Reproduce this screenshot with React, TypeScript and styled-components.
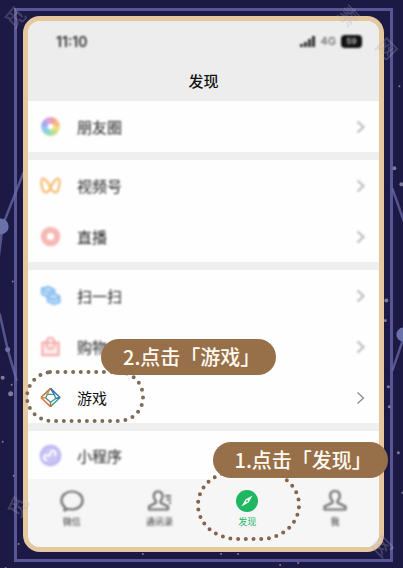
import React from 'react';
import styled, { createGlobalStyle, css } from 'styled-components';

const GlobalStyle = createGlobalStyle`
  *, *::before, *::after { box-sizing: border-box; }
  body {
    margin: 0;
    background: #1c1a45;
    font-family: "Noto Sans CJK SC", "Noto Sans", sans-serif;
  }
`;

const soft = css`
  filter: blur(1.2px);
`;

const Page = styled.div`
  position: relative;
  isolation: isolate;
  min-height: 100vh;
  padding: 8px 10px 7px 14px;
  background: #1c1a45;
  overflow: hidden;
`;

const Sky = styled.svg`
  position: absolute;
  inset: 0;
  width: 100%;
  height: 100%;
  z-index: -1;
`;

const Frame = styled.div`
  border: 3px solid rgba(110, 107, 176, 0.75);
  padding: 5px 6px 7px;
`;

const Phone = styled.main`
  display: flex;
  flex-direction: column;
  border: 5px solid #e5c8a0;
  border-radius: 17px;
  background: #efefef;
`;

const Header = styled.header`
  background: #ededed;
  border-radius: 12px 12px 0 0;
`;

const StatusBar = styled.div`
  display: flex;
  align-items: center;
  justify-content: space-between;
  height: 40px;
  padding: 0 17px 0 28px;
  color: #333;
  font-family: Inter, sans-serif;
  font-size: 14px;
  font-weight: 600;
  ${soft}
`;

const StatusIcons = styled.div`
  display: flex;
  align-items: center;
  gap: 5px;
  font-size: 11px;
  font-weight: 500;
  color: #666;
`;

const Battery = styled.span`
  width: 21px;
  height: 13px;
  border-radius: 4px;
  background: #111;
  color: #bbb;
  font-size: 8px;
  font-weight: 700;
  line-height: 13px;
  text-align: center;
`;

const Title = styled.h1`
  margin: 0;
  color: #111;
  font-size: 15px;
  font-weight: 500;
  line-height: 40px;
  text-align: center;
`;

const Groups = styled.div`
  display: flex;
  flex-direction: column;
  gap: 8px;
`;

const Group = styled.ul`
  margin: 0;
  padding: 0;
  list-style: none;
  background: #fefefe;
`;

const Item = styled.li`
  position: relative;
`;

const Row = styled.button<{ $soft: boolean; $short?: boolean }>`
  display: flex;
  align-items: center;
  gap: 15px;
  width: 100%;
  height: ${(p) => (p.$short ? 48 : 51)}px;
  padding: 0 14px 0 11px;
  border: 0;
  background: none;
  color: ${(p) => (p.$soft ? '#222' : '#111')};
  font-family: inherit;
  font-size: 15px;
  text-align: left;

  > * {
    ${(p) => p.$soft && soft}
  }
`;

const RowLabel = styled.span`
  flex: 1;
`;

const TabBar = styled.nav`
  display: grid;
  grid-template-columns: repeat(4, 1fr);
  height: 68px;
  background: #f6f6f6;
  border-radius: 0 0 12px 12px;
`;

const TabCell = styled.div`
  position: relative;
`;

const Tab = styled.button<{ $active: boolean }>`
  display: flex;
  flex-direction: column;
  align-items: center;
  gap: 2px;
  width: 100%;
  padding: 10px 0 0;
  border: 0;
  background: none;
  color: ${(p) => (p.$active ? '#1fb764' : '#333')};
  font-family: inherit;
  font-size: 9px;
  line-height: 13px;

  > * {
    ${(p) => !p.$active && soft}
  }
`;

const Ring = styled.svg<{ $place: 'row' | 'tab' }>`
  position: absolute;
  z-index: 1;
  overflow: visible;
  pointer-events: none;
  ${(p) =>
    p.$place === 'row'
      ? css`
          left: -2px;
          top: 0;
        `
      : css`
          left: -7px;
          top: -9px;
        `}
`;

const Callout = styled.div<{ $place: 'row' | 'tab' }>`
  position: absolute;
  z-index: 2;
  width: 175px;
  border-radius: 18px;
  background: #97704a;
  color: #fffaf0;
  font-size: 20px;
  font-weight: 500;
  line-height: 36px;
  white-space: nowrap;
  padding-left: 22px;
  ${(p) =>
    p.$place === 'row'
      ? css`
          left: 73px;
          top: -33px;
        `
      : css`
          left: 9px;
          top: -37px;
        `}
`;

const Chevron = ({ strong }: { strong: boolean }) => (
  <svg width="9" height="14" viewBox="0 0 9 14" fill="none" stroke={strong ? '#8c8c8c' : '#b8b8b8'} strokeWidth={strong ? 1.3 : 2} aria-hidden="true">
    <path d="M1.5 1.5 7.5 7l-6 5.5" />
  </svg>
);

const Icon = ({ children }: { children: React.ReactNode }) => (
  <svg width="23" height="23" viewBox="0 0 24 24" fill="none" strokeLinejoin="round" aria-hidden="true">
    {children}
  </svg>
);

const petals = ['#f2a09a', '#f5bd84', '#f3dc7e', '#b7df8e', '#8edbb8', '#8fc8f0', '#a3a8f0', '#d6a0e4'];

const MomentsIcon = () => (
  <Icon>
    {petals.map((color, i) => (
      <path key={color} d="M12 12 8 3a10 10 0 0 1 8 0Z" fill={color} transform={`rotate(${i * 45 + 22} 12 12)`} />
    ))}
    <circle cx="12" cy="12" r="3" fill="#fff" />
  </Icon>
);

const ChannelsIcon = () => (
  <Icon>
    <path d="M12 14.5C9.500 8.500 6 4 3.600 5c-2.200 1-.6 13 2.600 14C8.500 19.600 10.500 17.500 12 14.500c1.500 3 3.500 5.100 5.800 4.500 3.200-1 4.800-13 2.600-14C18 4 14.500 8.500 12 14.500Z" stroke="#f7bd72" strokeWidth="2.400" />
  </Icon>
);

const LiveIcon = () => (
  <Icon>
    <circle cx="12" cy="12" r="7" stroke="#f6b9b6" strokeWidth="6.500" />
    <circle cx="12" cy="12" r="3.200" fill="#fff" />
  </Icon>
);

const ScanIcon = () => (
  <Icon>
    <g stroke="#8dc1f0" strokeWidth="2.200" fill="#c3dffa">
      <path d="M3 4.500 10 3l6 3v6l-7 1.500-6-3Z" />
      <path d="M9 12.500 16 10l5.500 3v6L15 21l-6-3Z" />
      <path d="m3 6 7 3 6-2M9 14l6 2.500 6-2" fill="none" />
    </g>
  </Icon>
);

const ShopIcon = () => (
  <Icon>
    <path d="M3.500 8h17v13h-17Z" stroke="#f5b0b0" strokeWidth="2.400" fill="#fdeaea" />
    <path d="M8 13V7a4 4 0 0 1 8 0v6M9 14h6" stroke="#f5b0b0" strokeWidth="2.400" />
  </Icon>
);

const GamesIcon = () => (
  <Icon>
    <g strokeWidth="1.500">
      <path d="M2 12 12 2.500" stroke="#b9703f" />
      <path d="m12 2.500 10 9.500" stroke="#3a78b5" />
      <path d="M22 12 12 21.500" stroke="#39a98a" />
      <path d="M12 21.500 2 12" stroke="#e0713c" />
      <path d="M8.500 8.500 16 9l1.500 4-5.500 4-5-4.500Z" stroke="#4a9b8f" />
      <path d="M12 2.500 8.500 8.500M7 12.500 2 12" stroke="#d88a4a" />
      <path d="m12 2.500 4 6.500M17.500 13 22 12" stroke="#3b6fae" />
      <path d="M12 17v4.500" stroke="#cf5a45" />
    </g>
  </Icon>
);

const MiniProgramIcon = () => (
  <Icon>
    <circle cx="12" cy="12" r="10" fill="#c9c4f5" stroke="#bcb6f2" strokeWidth="2.500" />
    <path d="M8.500 16.500a2.500 2.500 0 1 1 0-4.500c2.500 1 3.500-.5 3.500-2.500a2.600 2.600 0 1 1 3.800 2.500" stroke="#fff" strokeWidth="2.200" />
  </Icon>
);

const TabIcon = ({ children }: { children: React.ReactNode }) => (
  <svg width="24" height="24" viewBox="0 0 24 24" fill="none" stroke="#6c6c6c" strokeWidth="2.200" strokeLinejoin="round" aria-hidden="true">
    {children}
  </svg>
);

const ChatIcon = () => (
  <TabIcon>
    <path d="M12 2.500c6 0 10.500 3.800 10.500 9s-4.500 9-10.500 9c-1.500 0-2.900-.2-4.100-.7L4.500 21.500l.5-3.300C2.800 16.500 1.500 14.200 1.500 11.500c0-5.200 4.500-9 10.500-9Z" />
  </TabIcon>
);

const ContactsIcon = () => (
  <TabIcon>
    <path d="M10 2.500c3 0 4.500 2 4.500 4.800 0 2.200-1 3.700-2 4.900v1.600l7.500 3.700v3H1v-3l7-3.700v-1.600c-1.200-1.200-2.200-2.700-2.200-4.900 0-2.800 1.500-4.800 4.200-4.800Z" />
    <path d="M17 7h6M18.500 10.500H23M21 14h2" />
  </TabIcon>
);

const DiscoverIcon = () => (
  <TabIcon>
    <circle cx="12" cy="12" r="11" fill="#1fb75f" stroke="none" />
    <path d="M17.500 6.500 13.600 13.600 6.500 17.500l3.900-7.100Z" fill="#f4fff8" stroke="none" />
    <circle cx="12" cy="12" r="0.900" fill="#1fb75f" stroke="none" />
  </TabIcon>
);

const MeIcon = () => (
  <TabIcon>
    <path d="M12 2c3 0 4.800 2.100 4.800 5 0 2.200-1 3.800-2.300 5v1.800l8 3.700v3h-21v-3l8-3.700V12C8.200 10.800 7.200 9.200 7.200 7c0-2.900 1.800-5 4.800-5Z" />
  </TabIcon>
);

type Entry = { label: string; icon: React.ReactNode; callout?: string; last?: boolean };

const groups: Entry[][] = [
  [{ label: '朋友圈', icon: <MomentsIcon /> }],
  [
    { label: '视频号', icon: <ChannelsIcon /> },
    { label: '直播', icon: <LiveIcon /> },
  ],
  [
    { label: '扫一扫', icon: <ScanIcon /> },
    { label: '购物', icon: <ShopIcon /> },
    { label: '游戏', icon: <GamesIcon />, callout: '2.点击「游戏」' },
  ],
  [{ label: '小程序', icon: <MiniProgramIcon />, last: true }],
];

const tabs: Entry[] = [
  { label: '微信', icon: <ChatIcon /> },
  { label: '通讯录', icon: <ContactsIcon /> },
  { label: '发现', icon: <DiscoverIcon />, callout: '1.点击「发现」' },
  { label: '我', icon: <MeIcon /> },
];

const stars: [number, number, number][] = [
  [394, 168, 2], [401, 184, 2], [3, 377, 2], [11, 393, 2.5], [12, 384, 1], [14, 475, 1],
  [13, 281, 1], [143, 553, 1], [19, 543, 1], [6, 567, 1], [280, 564, 1], [221, 553, 1],
  [238, 553, 1], [386, 300, 2], [385, 320, 1.5], [388, 386, 1.5], [389, 406, 1.5], [398, 452, 1.5],
  [402, 492, 1], [392, 547, 1], [399, 86, 1], [3, 441, 1], [298, 562, 1],
];

const Background = () => (
  <Sky viewBox="0 0 403 568" preserveAspectRatio="xMidYMid slice" aria-hidden="true">
    <g stroke="#55558c" strokeWidth="2.500" fill="none">
      <path d="M24 172 3 225-2 265" />
      <path d="M0 313 8 349 17 380" />
      <path d="m392 188 14 40M404 335 392 370" />
    </g>
    <g fill="#6a70a8">
      <circle cx="1" cy="226" r="8" />
      <circle cx="8" cy="349" r="2.500" />
      <circle cx="403" cy="334" r="7" />
    </g>
    {stars.map(([x, y, r]) => (
      <circle key={`${x}-${y}`} cx={x} cy={y} r={r} fill="#a9a4b8" opacity="0.700" />
    ))}
  </Sky>
);

const Watermark = styled.svg`
  position: absolute;
  inset: 0;
  width: 100%;
  height: 100%;
  z-index: 3;
  pointer-events: none;
  fill: #aaa8bc;
  opacity: 0.28;
  font-size: 20px;
  font-weight: 500;
  text-anchor: middle;
`;

const marks: [string, number, number, number][] = [
  ['觅', 16, 18, -45],
  ['素', 348, 16, 45],
  ['网', 386, 49, 45],
  ['觅', 19, 506, -60],
  ['网', 382, 546, -45],
];

export default function App() {
  return (
    <Page>
      <GlobalStyle />
      <Background />
      <Frame>
        <Phone>
          <Header>
            <StatusBar>
              <span>11:10</span>
              <StatusIcons>
                <svg width="16" height="11" viewBox="0 0 16 11" fill="#333" aria-hidden="true">
                  <path d="M0 8h3v3H0ZM4 6h3v5H4ZM8 3h3v8H8ZM12 0h3v11h-3Z" />
                </svg>
                <span>4G</span>
                <Battery>59</Battery>
              </StatusIcons>
            </StatusBar>
            <Title>发现</Title>
          </Header>
          <Groups>
            {groups.map((items) => (
              <Group key={items[0].label}>
                {items.map((item) => (
                  <Item key={item.label}>
                    <Row type="button" $soft={!item.callout} $short={item.last}>
                      {item.icon}
                      <RowLabel>{item.label}</RowLabel>
                      {!item.last && <Chevron strong={!!item.callout} />}
                    </Row>
                    {item.callout && (
                      <>
                        <Ring $place="row" width="118" height="50" viewBox="0 0 118 50" fill="none" stroke="#7d6d58" strokeWidth="4" strokeLinecap="round" strokeDasharray="0 7.7" aria-hidden="true">
                          <path d="M24 0H95C110 2 117 14 117 25s-7 22-22 24H24C9 47 1 36 1 25S9 2 24 0Z" />
                        </Ring>
                        <Callout $place="row">{item.callout}</Callout>
                      </>
                    )}
                  </Item>
                ))}
              </Group>
            ))}
          </Groups>
          <TabBar>
            {tabs.map((tab) => (
              <TabCell key={tab.label}>
                <Tab type="button" $active={!!tab.callout}>
                  {tab.icon}
                  <span>{tab.label}</span>
                </Tab>
                {tab.callout && (
                  <>
                    <Ring $place="tab" width="103" height="70" viewBox="0 0 103 70" fill="none" stroke="#86634c" strokeWidth="4" strokeLinecap="round" strokeDasharray="0 7.7" aria-hidden="true">
                      <path d="M38 1H66C89 3 102 19 102 35S89 67 66 69H38C14 67 1 51 1 35S14 3 38 1Z" />
                    </Ring>
                    <Callout $place="tab">{tab.callout}</Callout>
                  </>
                )}
              </TabCell>
            ))}
          </TabBar>
        </Phone>
      </Frame>
      <Watermark viewBox="0 0 403 568" preserveAspectRatio="xMidYMid slice" aria-hidden="true">
        {marks.map(([text, x, y, angle]) => (
          <text key={`${x}-${y}`} transform={`translate(${x} ${y}) rotate(${angle})`} dy="7">
            {text}
          </text>
        ))}
      </Watermark>
    </Page>
  );
}
